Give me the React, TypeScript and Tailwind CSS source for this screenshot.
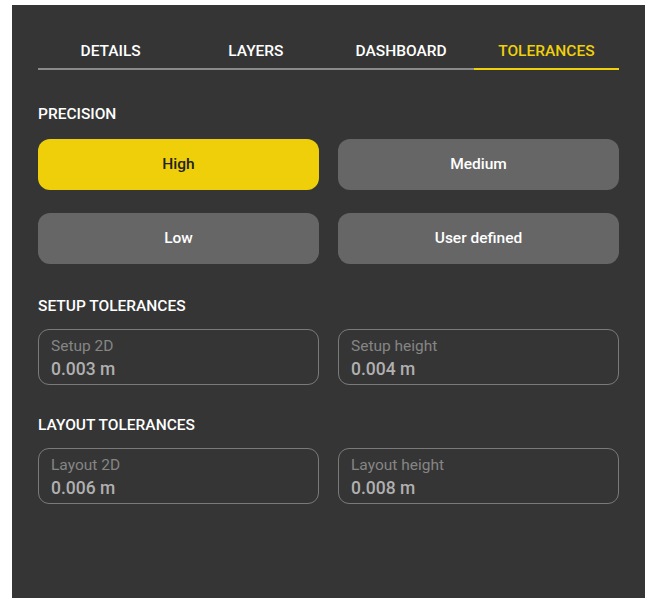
import { useState } from "react"

const tabs = ["DETAILS", "LAYERS", "DASHBOARD", "TOLERANCES"]
const levels = ["High", "Medium", "Low", "User defined"]

const Field = ({ label, value }: { label: string; value: string }) => (
    <div className="h-[56px] rounded-[11px] border border-[#7a7a7a] px-[12px] pt-[6px]">
        <p className="text-[15.5px] leading-[20px] text-[#858585]">{label}</p>
        <p className="text-[17.5px] leading-[26px] font-medium text-[#b0b0b0]">{value}</p>
    </div>
)

const App = () => {
    const [tab, setTab] = useState("TOLERANCES")
    const [level, setLevel] = useState("High")

    return (
        <main className="bg-white w-[657px] h-[605px] pl-[12px] pt-[5px]" style={{ fontFamily: "Roboto, 'Liberation Sans', sans-serif" }}>
            <div className="bg-[#353535] w-[633px] h-[593px] px-[26px] pt-[36px]">
                <nav className="grid grid-cols-4">
                    {tabs.map(t => (
                        <button
                            key={t}
                            onClick={() => setTab(t)}
                            className={`pb-[7px] text-[15.5px] leading-[20px] font-medium border-b-2 ${t === tab ? "text-[#efd00b] border-[#efd00b]" : "text-white border-[#8a8a8a]"}`}
                        >
                            {t}
                        </button>
                    ))}
                </nav>

                <p className="mt-[34px] text-[15.5px] leading-[20px] font-medium text-white">PRECISION</p>
                <section className="mt-[15px] grid grid-cols-2 gap-x-[19px] gap-y-[23px]">
                    {levels.map(l => (
                        <button
                            key={l}
                            onClick={() => setLevel(l)}
                            className={`h-[51px] rounded-[12px] text-[15.5px] font-medium ${l === level ? "bg-[#eecf0a] text-[#222]" : "bg-[#666666] text-white"}`}
                        >
                            {l}
                        </button>
                    ))}
                </section>

                <p className="mt-[32px] text-[15.5px] leading-[20px] font-medium text-white">SETUP TOLERANCES</p>
                <section className="mt-[13px] grid grid-cols-2 gap-x-[19px]">
                    <Field label="Setup 2D" value="0.003 m" />
                    <Field label="Setup height" value="0.004 m" />
                </section>

                <p className="mt-[30px] text-[15.5px] leading-[20px] font-medium text-white">LAYOUT TOLERANCES</p>
                <section className="mt-[13px] grid grid-cols-2 gap-x-[19px]">
                    <Field label="Layout 2D" value="0.006 m" />
                    <Field label="Layout height" value="0.008 m" />
                </section>
            </div>
        </main>
    )
}

export default App
